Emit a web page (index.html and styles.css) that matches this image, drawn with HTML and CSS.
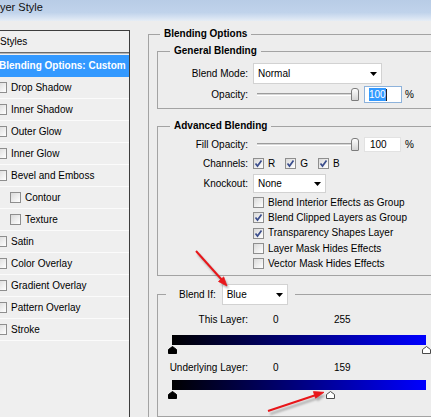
FILE: index.html
```html
<!DOCTYPE html>
<html>
<head>
<meta charset="utf-8">
<link rel="stylesheet" href="styles.css">
</head>
<body>
<div class="titlebar"><span class="title">yer Style</span></div>
<div class="main">
  <div class="styles-panel">
    <div class="styles-head">Styles</div>
    <ul class="style-list">
      <li class="style-item active">Blending Options: Custom</li>
      <li class="style-item"><span class="cb"></span>Drop Shadow</li>
      <li class="style-item"><span class="cb"></span>Inner Shadow</li>
      <li class="style-item"><span class="cb"></span>Outer Glow</li>
      <li class="style-item"><span class="cb"></span>Inner Glow</li>
      <li class="style-item"><span class="cb"></span>Bevel and Emboss</li>
      <li class="style-item sub"><span class="cb"></span>Contour</li>
      <li class="style-item sub"><span class="cb"></span>Texture</li>
      <li class="style-item"><span class="cb"></span>Satin</li>
      <li class="style-item"><span class="cb"></span>Color Overlay</li>
      <li class="style-item"><span class="cb"></span>Gradient Overlay</li>
      <li class="style-item"><span class="cb"></span>Pattern Overlay</li>
      <li class="style-item"><span class="cb"></span>Stroke</li>
    </ul>
  </div>

  <div class="options">
    <fieldset class="group outer">
      <legend>Blending Options</legend>

      <fieldset class="group general">
        <legend>General Blending</legend>
        <div class="field">
          <span class="lbl">Blend Mode:</span>
          <div class="select sel-mode"><span>Normal</span><svg class="caret" width="7" height="4" viewBox="0 0 7 4"><path d="M0 0H7L3.5 4Z"/></svg></div>
        </div>
        <div class="field row-op">
          <span class="lbl">Opacity:</span>
          <div class="slider"><div class="track"></div><span class="knob"></span></div>
          <div class="num focused"><span class="seltext">100</span><span class="caret-line"></span></div>
          <span class="pct">%</span>
        </div>
      </fieldset>

      <fieldset class="group advanced">
        <legend>Advanced Blending</legend>
        <div class="field row-fill">
          <span class="lbl">Fill Opacity:</span>
          <div class="slider"><div class="track"></div><span class="knob"></span></div>
          <div class="num small"><span>100</span></div>
          <span class="pct">%</span>
        </div>
        <div class="field channels">
          <span class="lbl">Channels:</span>
          <span class="ch"><span class="cb checked"><svg width="9" height="9" viewBox="0 0 9 9"><path d="M1.5 4.5L3.5 7L7.5 1.5"/></svg></span>R</span>
          <span class="ch"><span class="cb checked"><svg width="9" height="9" viewBox="0 0 9 9"><path d="M1.5 4.5L3.5 7L7.5 1.5"/></svg></span>G</span>
          <span class="ch"><span class="cb checked"><svg width="9" height="9" viewBox="0 0 9 9"><path d="M1.5 4.5L3.5 7L7.5 1.5"/></svg></span>B</span>
        </div>
        <div class="field knock">
          <span class="lbl">Knockout:</span>
          <div class="select sel-knock"><span>None</span><svg class="caret" width="7" height="4" viewBox="0 0 7 4"><path d="M0 0H7L3.5 4Z"/></svg></div>
        </div>
        <div class="checks">
          <div class="chk"><span class="cb"></span>Blend Interior Effects as Group</div>
          <div class="chk"><span class="cb checked"><svg width="9" height="9" viewBox="0 0 9 9"><path d="M1.5 4.5L3.5 7L7.5 1.5"/></svg></span>Blend Clipped Layers as Group</div>
          <div class="chk"><span class="cb checked"><svg width="9" height="9" viewBox="0 0 9 9"><path d="M1.5 4.5L3.5 7L7.5 1.5"/></svg></span>Transparency Shapes Layer</div>
          <div class="chk"><span class="cb"></span>Layer Mask Hides Effects</div>
          <div class="chk"><span class="cb"></span>Vector Mask Hides Effects</div>
        </div>
      </fieldset>

      <fieldset class="group blendif">
        <legend class="bi-legend"><span class="bi-head"><span>Blend If:</span><span class="select sel-blend"><span>Blue</span><svg class="caret" width="7" height="4" viewBox="0 0 7 4"><path d="M0 0H7L3.5 4Z"/></svg></span></span></legend>
        <div class="bi-row">
          <span class="lbl">This Layer:</span>
          <span class="v0">0</span>
          <span class="v1">255</span>
        </div>
        <div class="bar-wrap">
          <div class="gbar"></div>
          <svg class="thumb" style="left: calc(0% - 4px)" width="9" height="8" viewBox="0 0 9 8"><path class="th-dark" d="M0.5 7.5V3.5L4.5 0.5L8.5 3.5V7.5Z"/></svg>
          <svg class="thumb" style="left: calc(100% - 4px)" width="9" height="8" viewBox="0 0 9 8"><path class="th-light" d="M0.5 7.5V3.5L4.5 0.5L8.5 3.5V7.5Z"/></svg>
        </div>
        <div class="bi-row under">
          <span class="lbl">Underlying Layer:</span>
          <span class="v0">0</span>
          <span class="v1">159</span>
        </div>
        <div class="bar-wrap second">
          <div class="gbar"></div>
          <svg class="thumb" style="left: calc(0% - 4px)" width="9" height="8" viewBox="0 0 9 8"><path class="th-dark" d="M0.5 7.5V3.5L4.5 0.5L8.5 3.5V7.5Z"/></svg>
          <svg class="thumb" style="left: calc(62.35% - 4px)" width="9" height="8" viewBox="0 0 9 8"><path class="th-light" d="M0.5 7.5V3.5L4.5 0.5L8.5 3.5V7.5Z"/></svg>
        </div>
      </fieldset>
    </fieldset>
  </div>
</div>

<svg class="arrows" width="431" height="417" viewBox="0 0 431 417">
  <defs>
    <filter id="blur" x="-20%" y="-20%" width="140%" height="140%"><feGaussianBlur stdDeviation="1.2"/></filter>
  </defs>
  <g class="arrow-shadow" transform="translate(2,3)" filter="url(#blur)">
    <line x1="196" y1="251" x2="222" y2="280"/>
    <polygon points="227,286 218.5,281.5 223.7,276.9"/>
    <line x1="268" y1="411" x2="316" y2="395"/>
    <polygon points="324,392.3 315.6,398.2 313.4,391.6"/>
  </g>
  <g class="arrow-red">
    <line x1="196" y1="251" x2="222" y2="280"/>
    <polygon points="227,286 218.5,281.5 223.7,276.9"/>
    <line x1="268" y1="411" x2="316" y2="395"/>
    <polygon points="324,392.3 315.6,398.2 313.4,391.6"/>
  </g>
</svg>
</body>
</html>
```
FILE: styles.css
```css
* { box-sizing: border-box; }
html, body { margin: 0; padding: 0; }
body {
  width: 431px;
  height: 417px;
  overflow: hidden;
  position: relative;
  background: #ededed;
  font: 10px/12px "Liberation Sans", Arial, sans-serif;
  color: #000;
}

.titlebar {
  height: 21px;
  background: linear-gradient(to bottom, #b8cce6 0%, #c0d3eb 60%, #d7e3f2 85%, #e6edf5 100%);
  font-size: 11px;
  line-height: 15px;
  color: #111;
}

.main {
  display: flex;
  align-items: flex-start;
  margin-top: 7px;
}

/* Left styles list */
.styles-panel {
  flex: none;
  width: 140px;
  height: 400px;
  margin-left: -10px;
  margin-top: 2px;
  border: 1px solid #3d3d3d;
  background: #efefef;
}
.styles-head {
  height: 22px;
  line-height: 21px;
  padding-left: 9px;
  border-bottom: 1px solid #6b6b6b;
}
.style-list {
  list-style: none;
  margin: 0;
  padding: 1px 0 0;
  border-top: 1px solid #b4b4b4;
}
.style-item {
  height: 22px;
  display: flex;
  align-items: center;
  gap: 4px;
  padding-left: 5px;
  border-bottom: 1px solid #fbfbfb;
  white-space: nowrap;
}
.style-item.sub { padding-left: 19px; }
.style-item.active {
  background: #3399ff;
  border-bottom-color: #3399ff;
  color: #fff;
  font-weight: bold;
  padding-left: 8px;
}

/* checkbox */
.cb {
  flex: none;
  width: 11px;
  height: 11px;
  border: 1px solid #8e8e8e;
  background: linear-gradient(135deg, #d9d9d9 0%, #f4f4f4 70%, #ffffff 100%);
  display: inline-flex;
  align-items: center;
  justify-content: center;
}
.cb svg path {
  fill: none;
  stroke: #3a4d8c;
  stroke-width: 1.7;
}

/* Right options */
.options {
  flex: none;
  width: 300px;
  margin-left: 18px;
}
fieldset.group {
  margin: 0;
  padding: 0;
  min-width: 0;
  border: 1px solid #a3a3a3;
}
fieldset.group > legend {
  padding: 0 4px;
  font-weight: bold;
  line-height: 12px;
}
fieldset.outer { padding: 5px 0 10px 8px; }
fieldset.outer > legend { margin-left: 3px; margin-top: 1px; }
fieldset.general > legend, fieldset.advanced > legend { margin-left: 12px; }
fieldset.general { padding: 6px 0 5px; }
fieldset.advanced { margin-top: 11px; padding: 5px 0 4px; }
fieldset.blendif { margin-top: 8px; padding: 9px 0 16px; }
fieldset.group > legend.bi-legend {
  margin-left: 8px;
  padding: 0 7px 0 13px;
  font-weight: normal;
}
.bi-head {
  display: flex;
  align-items: center;
  gap: 6px;
  height: 21px;
}

.field {
  display: flex;
  align-items: center;
}
.lbl {
  flex: none;
  width: 90px;
  margin-right: 5px;
  text-align: right;
  white-space: nowrap;
}

.select {
  display: flex;
  align-items: center;
  justify-content: space-between;
  background: #fff;
  border: 1px solid #d2d2d2;
  padding: 0 4px;
}
.caret path { fill: #000; }
.sel-mode { width: 129px; height: 21px; }
.sel-knock { width: 73px; height: 19px; }
.sel-blend { width: 66px; height: 21px; }

.row-op { margin-top: 2px; height: 17px; }
.row-fill { height: 15px; }

.slider {
  flex: none;
  display: flex;
  align-items: center;
  width: 102px;
  height: 13px;
  margin-left: 4px;
}
.track {
  flex: 1;
  height: 3px;
  margin-right: -4px;
  border-top: 1px solid #9c9c9c;
  border-bottom: 1px solid #ffffff;
  background: #d6d6d6;
}
.knob {
  flex: none;
  position: relative;
  width: 8px;
  height: 13px;
  border: 1px solid #7c7c7c;
  border-radius: 3px 3px 1px 1px;
  background: linear-gradient(to bottom, #fdfdfd, #d4d4d4);
}
.num {
  flex: none;
  display: flex;
  align-items: center;
  margin-left: 5px;
  width: 38px;
  height: 17px;
  padding-left: 4px;
  background: #fff;
  border: 1px solid #c8c8c8;
}
.num.focused { border-color: #8db2db; }
.num.small { width: 37px; height: 15px; padding-left: 5px; border-color: #e2e2e2; }
.seltext {
  background: #3399ff;
  color: #fff;
  line-height: 13px;
}
.caret-line {
  width: 1px;
  height: 12px;
  background: #222;
}
.pct { margin-left: 3px; }
.row-fill .pct { margin-left: 4px; }

.channels { margin-top: 5px; height: 13px; }
.ch {
  display: inline-flex;
  align-items: center;
  gap: 4px;
  margin-right: 10px;
}
.knock { margin-top: 4px; }
.checks { margin-left: 95px; margin-top: 2px; }
.chk {
  height: 15.3px;
  display: flex;
  align-items: center;
  gap: 4px;
  white-space: nowrap;
}

.bi-row {
  display: flex;
  align-items: center;
  height: 12px;
}
.bi-row.under { margin-top: 7px; }
.v0 { width: 61px; margin-left: 20px; }
.bar-wrap {
  position: relative;
  width: 254px;
  height: 20px;
  margin-left: 14px;
  margin-top: 9px;
}
.bar-wrap.second { margin-top: 6px; }
.gbar {
  height: 10px;
  background: linear-gradient(to right, #000000, #0000ff);
}
.thumb {
  position: absolute;
  top: 11px;
}
.th-dark { fill: #000; stroke: #000; }
.th-light { fill: #fff; stroke: #4a4a4a; }

/* annotation arrows */
.arrows {
  position: absolute;
  left: 0;
  top: 0;
  pointer-events: none;
}
.arrow-shadow { opacity: 0.45; }
.arrow-shadow line { stroke: #555; stroke-width: 2; }
.arrow-shadow polygon { fill: #555; }
.arrow-red line { stroke: #e8161a; stroke-width: 2; }
.arrow-red polygon { fill: #e8161a; stroke: #e8161a; stroke-width: 0.8; }
```
